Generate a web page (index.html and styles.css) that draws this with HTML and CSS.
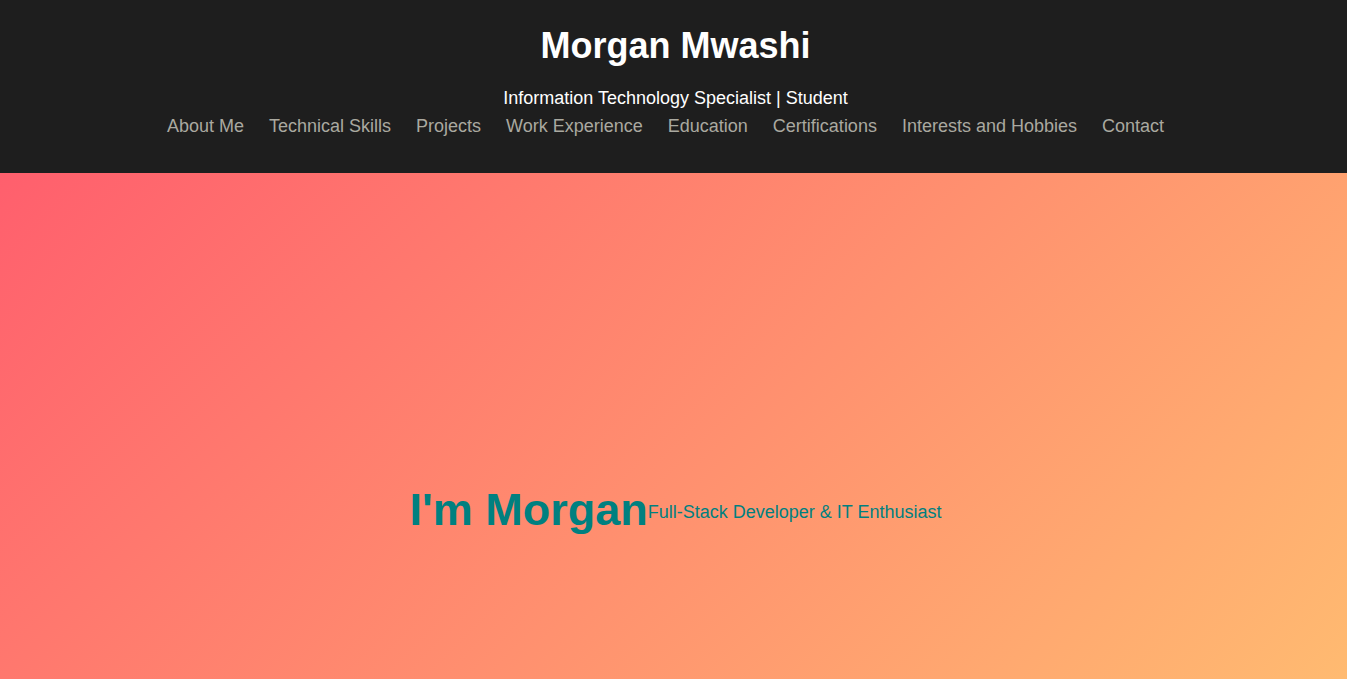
FILE: index.html
```html
<!DOCTYPE html>
<html lang="en">
<head>
<meta charset="utf-8">
<title>Morgan Mwashi</title>
<link rel="stylesheet" href="styles.css">
</head>
<body>
<header class="site-header">
  <h1 class="site-title">Morgan Mwashi</h1>
  <p class="site-subtitle">Information Technology Specialist | Student</p>
  <nav class="site-nav">
    <a href="#about">About Me</a>
    <a href="#skills">Technical Skills</a>
    <a href="#projects">Projects</a>
    <a href="#work">Work Experience</a>
    <a href="#education">Education</a>
    <a href="#certs">Certifications</a>
    <a href="#hobbies">Interests and Hobbies</a>
    <a href="#contact">Contact</a>
  </nav>
</header>
<section class="hero">
  <h2 class="hero-title">I'm Morgan</h2>
  <p class="hero-tag">Full-Stack Developer &amp; IT Enthusiast</p>
</section>
</body>
</html>
```
FILE: styles.css
```css
html, body {
  margin: 0;
  padding: 0;
}
body {
  font-family: "Liberation Sans", Arial, sans-serif;
  background: #1e1e1e;
}
.site-header {
  background: #1e1e1e;
  color: #fff;
  text-align: center;
  padding: 26px 20px 36px 24px;
}
.site-title {
  margin: 0;
  font-size: 36px;
  line-height: 40px;
  font-weight: bold;
}
.site-subtitle {
  margin: 21px 0 0;
  font-size: 18px;
  line-height: 22px;
}
.site-nav {
  display: flex;
  justify-content: center;
  gap: 25px;
  margin-top: 6px;
  padding-right: 20px;
}
.site-nav a {
  color: #aaa9a0;
  text-decoration: none;
  font-size: 18px;
  line-height: 22px;
}
.hero {
  height: 100vh;
  display: flex;
  justify-content: center;
  align-items: center;
  padding-left: 4px;
  box-sizing: border-box;
  background: linear-gradient(135deg, #ff5f6d, #ffc371);
  color: #008080;
}
.hero-title {
  margin: 0 0 6px;
  font-size: 45px;
  font-weight: bold;
}
.hero-tag {
  margin: 0;
  font-size: 18px;
}
```
